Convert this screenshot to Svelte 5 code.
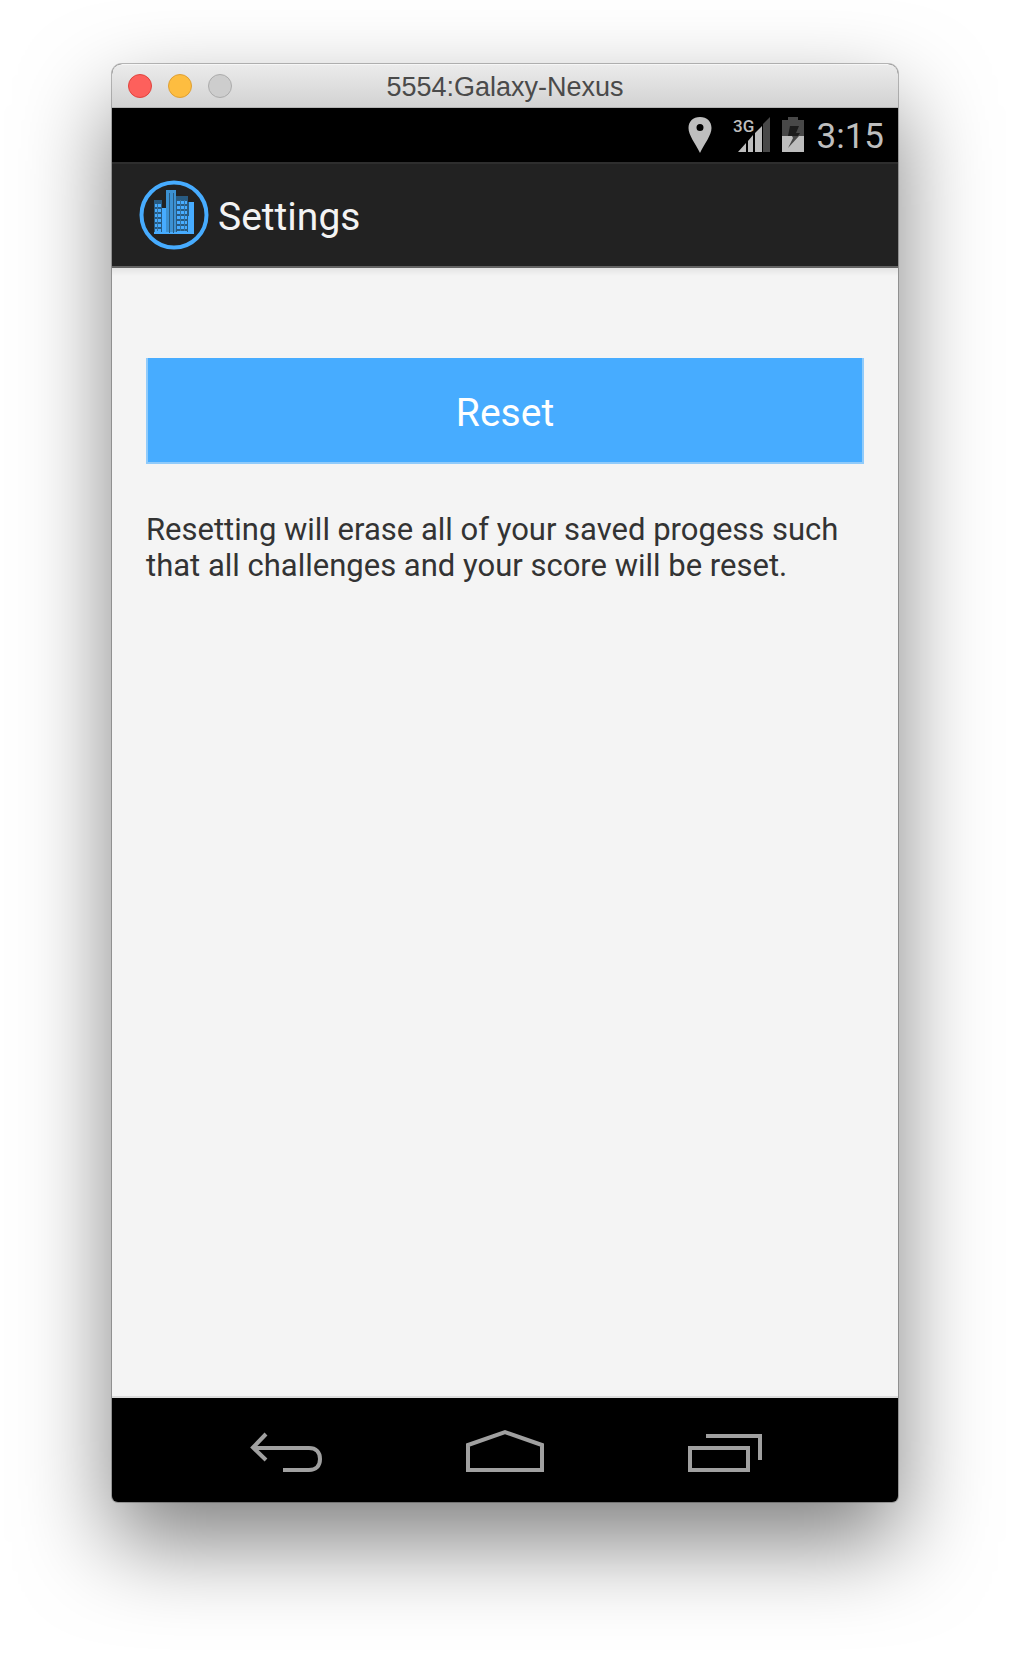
<script>
  const leftFloors = [24, 29, 34, 39, 44, 49];
  const rightFloors = [21, 26, 31, 36, 41, 46, 51];
</script>

<div class="desktop">
  <main class="window">
    <header class="titlebar">
      <div class="lights">
        <button class="light close" aria-label="Close"></button>
        <button class="light minimize" aria-label="Minimize"></button>
        <button class="light zoom" aria-label="Zoom" disabled></button>
      </div>
      <span class="window-title">5554:Galaxy-Nexus</span>
      <span></span>
    </header>

    <div class="status">
      <svg class="pin" width="24" height="38" viewBox="0 0 24 38" aria-hidden="true">
        <path fill-rule="evenodd" fill="#bebebe" d="M12 1C5 1 .5 5.500 .5 12c0 7 6.500 15 11.500 25 5-10 11.500-18 11.500-25C23.500 5.500 19 1 12 1zm0 7a3.500 3.500 0 1 1 0 7 3.500 3.500 0 0 1 0-7z" />
      </svg>
      <svg class="signal" width="38" height="38" viewBox="0 0 38 38" aria-label="3G signal">
        <path fill="#484848" d="M30 8 37 1V36H30z" />
        <path fill="#bebebe" d="M5 36 13 27V36zM15 36V25L20 19V36zM22 36V17L29 10V36z" />
        <text x="0" y="16" class="network">3G</text>
      </svg>
      <svg class="battery" width="24" height="38" viewBox="0 0 24 38" aria-label="Battery charging">
        <path fill="#484848" d="M7 1H17V4H23V20H1V4H7z" />
        <path fill="#bebebe" d="M1 20H23V36H1z" />
        <path fill="#1c1c1c" d="M9 10H18L15 17H19L17 20H7z" />
        <path fill="#484848" d="M11 20H18L7 32 12 22z" />
      </svg>
      <time class="clock">3:15</time>
    </div>

    <div class="actionbar">
      <svg class="logo" width="70" height="70" viewBox="0 0 70 70" aria-hidden="true">
        <circle cx="35" cy="35" r="32.500" fill="none" stroke="#47acff" stroke-width="4" />
        <path fill="#285b82" d="M15 20H23V54H15zM37 16H49V54H37z" />
        <path fill="#3c91d1" d="M27 10H37V54H27z" />
        <path fill="#47acff" d="M23 28H27V54H23zM49 22H55V54H49zM15 52H55V54H15z" />
        <path fill="#285b82" d="M30 13H31V53H30zM34 13H35V53H34zM49 22H50V36H49z" />
        <g fill="#47acff">
          {#each leftFloors as y}<rect x="16" {y} width="6" height="3" />{/each}
          {#each rightFloors as y}<rect x="38" {y} width="10" height="3" />{/each}
        </g>
        <path fill="#3473a4" d="M18 24H19V51H18zM41 20H42V51H41zM45 20H46V51H45z" />
      </svg>
      <h1>Settings</h1>
    </div>

    <section class="content">
      <button class="reset" aria-describedby="reset-note">Reset</button>
      <p id="reset-note">Resetting will erase all of your saved progess such that all challenges and your score will be reset.</p>
    </section>

    <nav class="navbar">
      <button aria-label="Back">
        <svg width="80" height="48" viewBox="0 0 80 48"><path d="M20 8 7 21.500 20 34M7 22H63C70 22 74 26 74 33S70 44 63 44H37" /></svg>
      </button>
      <button aria-label="Home">
        <svg width="80" height="48" viewBox="0 0 80 48"><path d="M3 44V19L40 6 77 19V44z" /></svg>
      </button>
      <button aria-label="Recent apps">
        <svg width="80" height="48" viewBox="0 0 80 48"><path d="M6 22H64V44H6zM22 10H76V34" /></svg>
      </button>
    </nav>
  </main>
</div>

<style>
  :global(body) {
    margin: 0;
    background: #fff;
  }
  .desktop {
    box-sizing: border-box;
    min-height: 100vh;
    padding: 64px 112px 160px;
    display: flex;
    overflow: hidden;
    font-family: Roboto, "Noto Sans", sans-serif;
  }
  .window {
    flex: 1;
    min-width: 0;
    display: flex;
    flex-direction: column;
    border-radius: 10px 10px 6px 6px;
    background: #000;
    box-shadow: 0 0 0 1px rgba(0, 0, 0, 0.25), 0 40px 90px rgba(0, 0, 0, 0.5);
  }
  button {
    margin: 0;
    padding: 0;
    border: 0;
    background: none;
    font: inherit;
  }
  .titlebar {
    box-sizing: border-box;
    height: 44px;
    padding: 0 16px;
    display: grid;
    grid-template-columns: 1fr auto 1fr;
    align-items: center;
    border-radius: 10px 10px 0 0;
    border-top: 1px solid #f6f6f6;
    border-bottom: 1px solid #b4b4b4;
    background: linear-gradient(#ebebeb, #d2d2d2);
  }
  .lights {
    display: flex;
    gap: 16px;
  }
  .light {
    box-sizing: border-box;
    width: 24px;
    height: 24px;
    border-radius: 50%;
    border: 1px solid;
  }
  .close {
    background: #fd605c;
    border-color: #e0443e;
  }
  .minimize {
    background: #fdbd40;
    border-color: #dea034;
  }
  .zoom {
    background: #cdcdcd;
    border-color: #acacac;
  }
  .window-title {
    padding-top: 2px;
    font: 27px/40px "Liberation Sans", Arial, sans-serif;
    color: #4a4a4a;
  }
  .status {
    height: 54px;
    padding-right: 14px;
    display: flex;
    align-items: center;
    justify-content: flex-end;
    color: #bebebe;
  }
  .signal {
    margin-left: 21px;
  }
  .battery {
    margin: 0 12px 0 10px;
  }
  .network {
    font: 500 17px Roboto, sans-serif;
    fill: #bebebe;
  }
  .clock {
    padding-top: 4px;
    font-size: 35px;
    line-height: 50px;
  }
  .actionbar {
    box-sizing: border-box;
    height: 106px;
    padding-left: 27px;
    display: flex;
    align-items: center;
    gap: 9px;
    border-top: 2px solid #2e2e2e;
    border-bottom: 2px solid #646464;
    background: #222;
    color: #f3f3f3;
  }
  h1 {
    margin: 0;
    padding-top: 4px;
    font-weight: 400;
    font-size: 39px;
    line-height: 48px;
  }
  .content {
    flex: 1;
    padding: 90px 34px 32px;
    background: linear-gradient(#e4e4e4, #f4f4f4 8px);
    border-bottom: 2px solid #dcdcdc;
  }
  .reset {
    box-sizing: border-box;
    width: 100%;
    height: 106px;
    padding-top: 6px;
    border: 2px solid #90cbfb;
    border-top: 0;
    background: #47acff;
    color: #fff;
    font-size: 39px;
  }
  p {
    margin: 48px 0 0;
    font-size: 31px;
    line-height: 36px;
    color: #333;
  }
  .navbar {
    height: 104px;
    padding: 0 64px;
    display: flex;
  }
  .navbar button {
    flex: 1;
    display: flex;
    align-items: center;
    justify-content: center;
  }
  .navbar path {
    fill: none;
    stroke: #a0a0a0;
    stroke-width: 4;
  }
</style>
